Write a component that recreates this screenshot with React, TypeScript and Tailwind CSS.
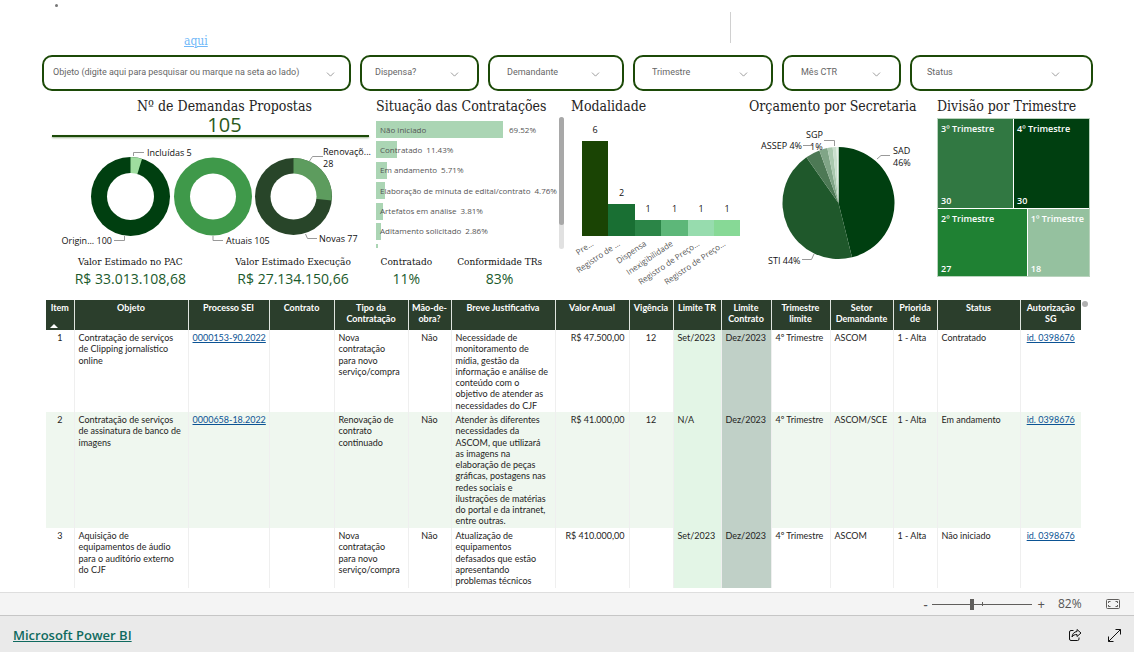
import type { ReactNode } from "react";
import { ChevronDown } from "lucide-react";

const SERIF = "font-['DejaVu_Serif_Condensed','DejaVu_Serif',serif]";

const filters = [
  { label: "Objeto (digite aqui para pesquisar ou marque na seta ao lado)", pad: "pl-[9px]", icon: "right-[14px]" },
  { label: "Dispensa?", pad: "pl-[13px]", icon: "right-[18px]" },
  { label: "Demandante", pad: "pl-[17px]", icon: "right-[22px]" },
  { label: "Trimestre", pad: "pl-[17px]", icon: "right-[23px]" },
  { label: "Mês CTR", pad: "pl-[17px]", icon: "right-[18px]" },
  { label: "Status", pad: "pl-[15px]", icon: "right-[31px]" },
];

function Filter({ label, pad, icon }: { label: string; pad: string; icon: string }) {
  return (
    <div className="relative h-9 min-w-0">
      <select
        aria-label={label}
        className={`h-full w-full appearance-none rounded-[10px] border-2 border-[#1c4a08] bg-white pr-9 font-[Roboto,sans-serif] text-[9px] text-[#666] ${pad}`}
      >
        <option>{label}</option>
      </select>
      <ChevronDown
        aria-hidden="true"
        size={13}
        strokeWidth={1.5}
        className={`pointer-events-none absolute top-[13px] text-[#888] ${icon}`}
      />
    </div>
  );
}

function Title({ children, className = "" }: { children: ReactNode; className?: string }) {
  return <h2 className={`${SERIF} whitespace-nowrap text-[14px] leading-[18px] text-[#252423] ${className}`}>{children}</h2>;
}

function point(cx: number, cy: number, r: number, deg: number) {
  const a = ((deg - 90) * Math.PI) / 180;
  return `${(cx + r * Math.cos(a)).toFixed(2)} ${(cy + r * Math.sin(a)).toFixed(2)}`;
}

function slice(cx: number, cy: number, r: number, from: number, to: number) {
  const large = to - from > 180 ? 1 : 0;
  return `M${cx} ${cy}L${point(cx, cy, r, from)}A${r} ${r} 0 ${large} 1 ${point(cx, cy, r, to)}Z`;
}

function Donuts() {
  return (
    <svg viewBox="0 0 323 107" className="h-[107px] w-full" role="img" aria-label="Demandas por origem" fontSize="9" fill="#111">
      <circle cx="78.5" cy="53.5" r="39.5" fill="#003f10" />
      <path d={slice(78.5, 53.5, 39.5, 0, 17)} fill="#9fdd9f" />
      <circle cx="78.5" cy="53.5" r="23.5" fill="#fff" />
      <circle cx="161" cy="53.5" r="39" fill="#3f994a" />
      <circle cx="161" cy="53.5" r="23" fill="#fff" />
      <circle cx="241.5" cy="53.5" r="38.5" fill="#284529" />
      <path d={slice(241.5, 53.5, 38.5, 0, 96)} fill="#5d9c5e" />
      <circle cx="241.5" cy="53.5" r="23" fill="#fff" />
      <g fill="none" stroke="#999">
        <path d="M81.5 13V9.5H92" />
        <path d="M62 97.5H72.500V93" />
        <path d="M161 93V97.500H171" />
        <path d="M257.500 18L260.500 13.500H271" />
        <path d="M253.500 91L255.500 95.500H265" />
      </g>
      <text x="95" y="13">Incluídas 5</text>
      <text x="60" y="101" textAnchor="end">Origin... 100</text>
      <text x="174" y="101">Atuais 105</text>
      <text x="271" y="12">Renovaçõ...</text>
      <text x="271" y="24">28</text>
      <text x="267" y="99">Novas 77</text>
    </svg>
  );
}

const situacoes = [
  ["Não iniciado", "69.52%", "w-[127px]"],
  ["Contratado", "11.43%", "w-[21px]"],
  ["Em andamento", "5.71%", "w-[11px]"],
  ["Elaboração de minuta de edital/contrato", "4.76%", "w-[9px]"],
  ["Artefatos em análise", "3.81%", "w-[7px]"],
  ["Aditamento solicitado", "2.86%", "w-[5px]"],
];

function Situacao() {
  return (
    <div className="flex h-[132px] justify-between">
      <div className="min-w-0 flex-1 pt-1">
        <ul className="flex h-[119px] flex-col justify-between">
          {situacoes.map(([name, pct, width], i) => (
            <li key={name} className="relative flex h-[17px] items-center whitespace-nowrap pl-1 text-[8px] text-[#555]">
              <span className={`absolute inset-y-0 left-0 bg-[#abd5b4] ${width}`} />
              <span className="relative">{name}</span>
              <span className={i === 0 ? "absolute left-[133px]" : "relative ml-1"}>{pct}</span>
            </li>
          ))}
        </ul>
        <div className="mt-1 h-1 w-0.5 bg-[#abd5b4]" />
      </div>
      <div className="w-[5px] shrink-0 rounded-full bg-[#e1e1e1]">
        <div className="h-[108px] rounded-full bg-[#a8a8a8]" />
      </div>
    </div>
  );
}

const modalidades = [
  { name: "Pre...", n: 6, h: 95, fill: "#1a4404" },
  { name: "Registro de ...", n: 2, h: 32, fill: "#196f33" },
  { name: "Dispensa", n: 1, h: 16, fill: "#2b8547" },
  { name: "Inexigibilidade", n: 1, h: 16, fill: "#5db779" },
  { name: "Registro de Preço...", n: 1, h: 16, fill: "#97dcae" },
  { name: "Registro de Preço...", n: 1, h: 16, fill: "#87d996" },
];

function Modalidade() {
  return (
    <svg viewBox="0 0 171 172" className="mt-px h-[172px] w-full" role="img" aria-label="Modalidade">
      {modalidades.map((m, i) => {
        const x = 11 + Math.round(i * 26.4);
        const next = 11 + Math.round((i + 1) * 26.4);
        const cx = (x + next) / 2;
        return (
          <g key={i}>
            <rect x={x} y={120 - m.h} width={next - x} height={m.h} fill={m.fill} />
            <text x={cx} y={120 - m.h - 8} fontSize="9" fill="#111" textAnchor="middle">{m.n}</text>
            <text x={cx - 1} y="129" fontSize="8" fill="#555" textAnchor="end" transform={`rotate(-34 ${cx - 1} 129)`}>{m.name}</text>
          </g>
        );
      })}
    </svg>
  );
}

const secretarias: [number, number, string][] = [
  [0, 166, "#003f10"],
  [166, 325, "#1f582b"],
  [325, 340, "#4d7955"],
  [340, 348.5, "#80a587"],
  [348.5, 354, "#a9c8ae"],
  [354, 358, "#c9dfcd"],
  [358, 360, "#e4f0e6"],
];

function Orcamento() {
  return (
    <svg viewBox="0 0 180 150" className="mt-px h-[150px] w-[180px]" role="img" aria-label="Orçamento por Secretaria" fontSize="9" fill="#111">
      {secretarias.map(([a, b, fill]) => (
        <path key={a} d={slice(89.5, 87, 56, a, b)} fill={fill} />
      ))}
      <g fill="none" stroke="#999">
        <path d="M128 43L132 39.500H141" />
        <path d="M75 24.500H85.500V30" />
        <path d="M54 29.500H64" />
        <path d="M53 143.500H62.500L65 138" />
      </g>
      <text x="144" y="38">SAD</text>
      <text x="144" y="50">46%</text>
      <text x="57" y="22">SGP</text>
      <text x="61" y="34">1%</text>
      <text x="53" y="33" textAnchor="end">ASSEP 4%</text>
      <text x="19" y="148">STI 44%</text>
    </svg>
  );
}

function Tile({ name, value, className }: { name: string; value: number; className: string }) {
  return (
    <div className={`flex flex-col justify-between overflow-hidden whitespace-nowrap px-[3px] pb-px pt-1 text-[9px] font-semibold leading-3 text-white ${className}`}>
      <span>{name}</span>
      <span>{value}</span>
    </div>
  );
}

function Kpi({ label, value }: { label: string; value: string }) {
  return (
    <div className="flex flex-col items-center whitespace-nowrap">
      <div className={`${SERIF} text-[10px] leading-3 text-[#111]`}>{label}</div>
      <div className="mt-px text-[14px] leading-5 text-[#1b5a2c]">{value}</div>
    </div>
  );
}

const columns: [string, string][] = [
  ["Item", "w-[28px]"],
  ["Objeto", "w-[114px]"],
  ["Processo SEI", "w-[81px]"],
  ["Contrato", "w-[65px]"],
  ["Tipo da Contratação", "w-[74px]"],
  ["Mão-de-obra?", "w-[43px]"],
  ["Breve Justificativa", "w-[104px]"],
  ["Valor Anual", "w-[74px]"],
  ["Vigência", "w-[44px]"],
  ["Limite TR", "w-[48px]"],
  ["Limite Contrato", "w-[50px]"],
  ["Trimestre limite", "w-[59px]"],
  ["Setor Demandante", "w-[63px]"],
  ["Priorida de", "w-[44px]"],
  ["Status", "w-[83px]"],
  ["Autorização SG", "w-[61px]"],
];

const rows = [
  {
    height: "h-[82px]",
    cells: ["1", "Contratação de serviços de Clipping jornalístico online", "0000153-90.2022", "", "Nova contratação para novo serviço/compra", "Não", "Necessidade de monitoramento de mídia, gestão da informação e análise de conteúdo com o objetivo de atender as necessidades do CJF", "R$ 47.500,00", "12", "Set/2023", "Dez/2023", "4º Trimestre", "ASCOM", "1 - Alta", "Contratado", "id. 0398676"],
  },
  {
    height: "h-[116px]",
    cells: ["2", "Contratação de serviços de assinatura de banco de imagens", "0000658-18.2022", "", "Renovação de contrato continuado", "Não", "Atender às diferentes necessidades da ASCOM, que utilizará as imagens na elaboração de peças gráficas, postagens nas redes sociais e ilustrações de matérias do portal e da intranet, entre outras.", "R$ 41.000,00", "12", "N/A", "Dez/2023", "4º Trimestre", "ASCOM/SCE", "1 - Alta", "Em andamento", "id. 0398676"],
  },
  {
    height: "h-[60px]",
    cells: ["3", "Aquisição de equipamentos de áudio para o auditório externo do CJF", "", "", "Nova contratação para novo serviço/compra", "Não", "Atualização de equipamentos defasados que estão apresentando problemas técnicos", "R$ 410.000,00", "", "Set/2023", "Dez/2023", "4º Trimestre", "ASCOM", "1 - Alta", "Não iniciado", "id. 0398676"],
  },
];

const centered = [0, 2, 5, 8, 15];

function cellStyle(c: number) {
  const align = centered.includes(c) ? "text-center" : c === 7 ? "text-right" : "text-left";
  const bg = c === 9 ? "bg-[#e3f5e6]" : c === 10 ? "bg-[#c0d0c7]" : "";
  return `${align} ${bg}`;
}

function Demandas() {
  return (
    <table className="w-full table-fixed border-collapse font-[Lato,sans-serif] text-[9px] leading-tight text-[#252423]">
      <thead>
        <tr className="h-[30px] bg-[#2b3e2c] text-white">
          {columns.map(([name, width], i) => (
            <th key={name} className={`${width} border-r border-[#dfe5df] px-0.5 pt-0.5 align-top font-bold last:border-r-0`}>
              {name}
              {i === 0 && (
                <svg viewBox="0 0 8 4" className="ml-0.5 mt-[11px] h-1 w-2" aria-hidden="true">
                  <path d="M0 4L4 0L8 4Z" fill="#fff" />
                </svg>
              )}
            </th>
          ))}
        </tr>
      </thead>
      <tbody>
        {rows.map((row) => (
          <tr key={row.cells[0]} className={`${row.height} even:bg-[#eff7ef]`}>
            {row.cells.map((cell, c) => (
              <td key={c} className={`border-r border-[#efefef] px-1 pt-0.5 align-top last:border-r-0 ${cellStyle(c)}`}>
                {c === 2 || c === 15 ? (
                  cell && <a href="#" className="whitespace-nowrap text-[#0b5394] underline">{cell}</a>
                ) : (
                  cell
                )}
              </td>
            ))}
          </tr>
        ))}
      </tbody>
    </table>
  );
}

export default function App() {
  return (
    <div className="flex h-screen flex-col overflow-hidden bg-white font-['Open_Sans',sans-serif]">
      <main className="flex min-h-0 flex-1 flex-col overflow-hidden">
        <header className="flex h-[55px] shrink-0 justify-between">
          <div className="pl-[55px]">
            <div className="mt-1 size-[3px] rounded-full bg-[#777]" />
            <a href="#" className={`${SERIF} ml-[129px] mt-[26px] block text-[12px] leading-4 text-[#70b8f8] underline`}>aqui</a>
          </div>
          <div className="mr-[403px] mt-3 h-[31px] w-px bg-[#d0d0d0]" />
        </header>

        <div className="grid shrink-0 grid-cols-[309fr_119fr_136fr_140fr_119fr_183fr] gap-[9px] pl-[42px] pr-[41px]">
          {filters.map((f) => (
            <Filter key={f.label} {...f} />
          ))}
        </div>

        <div className="grid h-[209px] shrink-0 grid-cols-[512fr_171fr_181fr_153fr] gap-x-[7px] pl-[52px] pr-[44px]">
          <section>
            <div className="grid grid-cols-[317fr_188fr] gap-[7px]">
              <div className="min-w-0">
                <Title className="mt-[6px] pl-7 text-center">Nº de Demandas Propostas</Title>
                <div className="pl-7 text-center text-[20px] leading-5 text-[#2c5a1c]">105</div>
                <div className="h-0.5 bg-[#1c4a08] shadow-[0_1px_2px_#9ab08f]" />
                <div className="-mr-[6px] pt-[6px]">
                  <Donuts />
                </div>
              </div>
              <div className="min-w-0">
                <Title className="mb-0.5 mt-[6px]">Situação das Contratações</Title>
                <Situacao />
              </div>
            </div>
            <div className="mt-[6px] grid grid-cols-[157fr_169fr_58fr_129fr]">
              <Kpi label="Valor Estimado no PAC" value="R$ 33.013.108,68" />
              <Kpi label="Valor Estimado Execução" value="R$ 27.134.150,66" />
              <Kpi label="Contratado" value="11%" />
              <Kpi label="Conformidade TRs" value="83%" />
            </div>
          </section>
          <section>
            <Title className="mt-[6px]">Modalidade</Title>
            <Modalidade />
          </section>
          <section>
            <Title className="mt-[6px]">Orçamento por Secretaria</Title>
            <Orcamento />
          </section>
          <section>
            <Title className="mb-[3px] mt-[6px]">Divisão por Trimestre</Title>
            <div className="flex h-[159px] flex-col gap-px border border-[#b9d3bd] bg-white">
              <div className="flex flex-[89] gap-px">
                <Tile name="3º Trimestre" value={30} className="flex-[75] bg-[#317842]" />
                <Tile name="4º Trimestre" value={30} className="flex-[75] bg-[#003f10]" />
              </div>
              <div className="flex flex-[67] gap-px">
                <Tile name="2º Trimestre" value={27} className="flex-[90] bg-[#1f8133]" />
                <Tile name="1º Trimestre" value={18} className="flex-[60] bg-[#95c19f]" />
              </div>
            </div>
          </section>
        </div>

        <div className="flex min-h-0 flex-1 gap-[3px] pl-[46px] pr-[46px]">
          <div className="min-w-0 flex-1">
            <Demandas />
          </div>
          <div className="mt-px size-[6px] rounded-full bg-[#b0b0b0]" />
        </div>
      </main>

      <div className="flex h-6 shrink-0 items-center justify-end border-y border-b-[#c6c6c6] border-t-[#dedede] bg-[#f4f4f4] pr-[14px] text-[#555]">
        <button type="button" aria-label="Reduzir" className="mr-1 text-[13px] font-semibold leading-4">-</button>
        <div className="relative flex h-4 w-[100px] items-center">
          <span className="absolute left-[50px] top-[6px] h-1 w-px bg-[#605e5c]" />
          <input
            type="range"
            aria-label="Zoom"
            min={0}
            max={100}
            defaultValue={40}
            className="m-0 h-px w-full appearance-none bg-[#605e5c] [&::-webkit-slider-thumb]:h-[11px] [&::-webkit-slider-thumb]:w-1 [&::-webkit-slider-thumb]:appearance-none [&::-webkit-slider-thumb]:bg-[#605e5c]"
          />
        </div>
        <button type="button" aria-label="Ampliar" className="ml-[6px] text-[13px] leading-4">+</button>
        <span className="ml-[13px] w-[36px] text-[12px] leading-4">82%</span>
        <button type="button" aria-label="Ajustar à página" className="ml-3">
          <svg width="14" height="10" viewBox="0 0 14 10" fill="none" stroke="#605e5c">
            <rect x="0.5" y="0.5" width="13" height="9" rx="1" />
            <path d="M2.5 4V2.500H4.500M9.500 2.500H11.500V4M11.500 6V7.500H9.500M4.500 7.500H2.500V6" />
          </svg>
        </button>
      </div>

      <footer className="flex h-9 shrink-0 items-center justify-between bg-[#eaeaea] pl-[13px] pr-[13px] pt-0.5">
        <a href="#" className="text-[13px] font-semibold leading-5 text-[#0f6a5f] underline">Microsoft Power BI</a>
        <div className="flex items-center gap-[26px]">
          <button type="button" aria-label="Compartilhar">
            <svg width="14" height="14" viewBox="0 0 14 14" fill="none" stroke="#111" strokeLinejoin="round">
              <path d="M5.500 2.500H3A1.500 1.500 0 0 0 1.500 4V11A1.500 1.500 0 0 0 3 12.500H9.500A1.500 1.500 0 0 0 11 11V9.500" />
              <path d="M9 1.500L13 5L9 8.500V6.500C6.500 6.500 5 7.300 4 9C4.300 6 6 3.800 9 3.500Z" />
            </svg>
          </button>
          <button type="button" aria-label="Tela cheia">
            <svg width="13" height="13" viewBox="0 0 13 13" fill="none" stroke="#111">
              <path d="M0.500 7.500V12.500H5.500M0.500 12.500L12.500 0.500M7.500 0.500H12.500V5.500" />
            </svg>
          </button>
        </div>
      </footer>
    </div>
  );
}
